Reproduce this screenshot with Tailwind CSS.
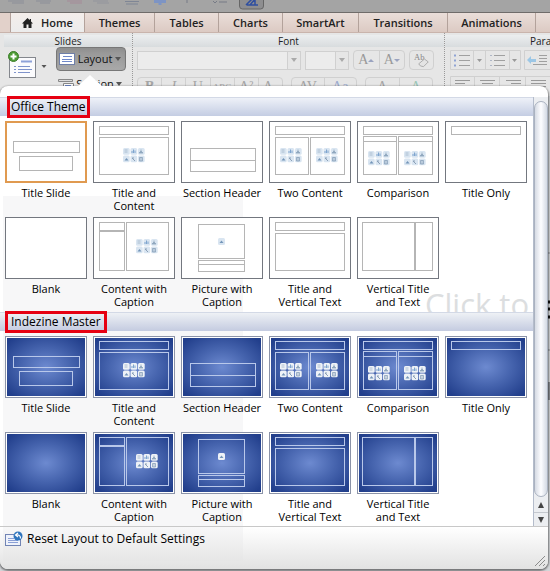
<!DOCTYPE html>
<html lang="en">

<head>
  <meta charset="UTF-8" />
  <meta name="viewport" content="width=device-width, initial-scale=1.0" />
  <title>Slide Layout Gallery</title>
  <script src="https://cdn.jsdelivr.net/npm/@tailwindcss/browser@4"></script>
</head>

<body class="relative min-h-screen overflow-hidden bg-[#d3d5d8] font-['Lucida_Grande','Open_Sans',sans-serif] text-black">

  <!-- Shared artwork -->
  <svg class="absolute size-0" aria-hidden="true">
    <defs>
      <radialGradient id="blue" cx="50%" cy="50%" r="65%">
        <stop offset="0" stop-color="#6d8ad0" />
        <stop offset="0.5" stop-color="#4664ae" />
        <stop offset="1" stop-color="#223f8c" />
      </radialGradient>
      <g id="glyphs">
        <path d="M1.5 2h3M1.5 4h3" stroke="#9fb4c9" stroke-width="0.8" />
        <path d="M9 5V3M10.5 5V1.5M12 5V2.5" stroke="#7fa5cf" stroke-width="1" />
        <path d="M18 1.5v2M16 5l2-2 2 2z" stroke="#8fa7be" stroke-width="0.8" fill="#8fa7be" />
        <path d="M1.5 12.5l2-2.500 2 2.500z" fill="#7395b8" />
        <path d="M9 10l3 3M9 10h2" stroke="#8ba0b7" stroke-width="1" />
        <path d="M16.5 9.500h3v3.500h-3zM18 9.500v3.500" stroke="#7f99b3" stroke-width="0.7" fill="none" />
      </g>
    </defs>
  </svg>

  <!-- Toolbar -->
  <header class="flex h-3 items-start justify-between overflow-hidden bg-[#a4a4a4]">
    <svg class="h-3 w-68 shrink-0" viewBox="0 0 272 12" fill="none">
      <path d="M8 1h16M12 3h12M36 1h15M40 3h10" stroke="#8b8e98" />
      <path d="M67 1h15M70 3h12" stroke="#a58a98" />
      <path d="M93 1h15M97 3h12" stroke="#92949c" />
      <path d="M125 1.500h14M126 4h12" stroke="#7f8695" />
      <path d="M154 1.500h12M160 0v5" stroke="#7d94c4" stroke-width="3" />
      <path d="M187 0v3M213 1l2 2 2-2M219 2h8" stroke="#777b86" />
      <path d="M239.500 -4v10q0 3 3 3h18q3 0 3-3v-10z" fill="#8e8e90" stroke="#666" />
      <path d="M246 5l7-7M250 5l5-6v6h3M247 5h10" stroke="#2f4fa0" stroke-width="1.500" />
    </svg>
  </header>

  <!-- Ribbon tabs -->
  <nav class="flex h-5 overflow-hidden border-t border-[#6f6c6a] bg-[#e2d1ca] text-[11px] leading-[19px] font-semibold text-[#222]">
    <span class="w-[11px] shrink-0 border-r border-[#b3a29b]"></span>
    <a href="#home" class="flex w-[73px] shrink-0 items-center justify-center gap-2 bg-linear-to-b from-[#f4eeeb] to-[#ececec]">
      <svg class="h-[10px] w-[11px]" viewBox="0 0 11 10" fill="#222"><path d="M5.500 0L0 5.500h1.500V10H4.500V6.500h2V10h3V5.500H11L9 3.500V1H7.800v1.300z" /></svg>
      Home</a>
    <a href="#themes" class="w-[71px] shrink-0 border-x border-[#b3a29b] bg-linear-to-b from-[#eaded9] to-[#dccac3] text-center">Themes</a>
    <a href="#tables" class="w-16 shrink-0 border-r border-[#b3a29b] bg-linear-to-b from-[#eaded9] to-[#dccac3] text-center">Tables</a>
    <a href="#charts" class="w-16 shrink-0 border-r border-[#b3a29b] bg-linear-to-b from-[#eaded9] to-[#dccac3] text-center">Charts</a>
    <a href="#smartart" class="w-[76px] shrink-0 border-r border-[#b3a29b] bg-linear-to-b from-[#eaded9] to-[#dccac3] text-center">SmartArt</a>
    <a href="#transitions" class="w-[89px] shrink-0 border-r border-[#b3a29b] bg-linear-to-b from-[#eaded9] to-[#dccac3] text-center">Transitions</a>
    <a href="#animations" class="w-[88px] shrink-0 border-r border-[#b3a29b] bg-linear-to-b from-[#eaded9] to-[#dccac3] text-center">Animations</a>
    <span class="flex-1 bg-linear-to-b from-[#eaded9] to-[#dccac3]"></span>
  </nav>

  <!-- Ribbon -->
  <section class="flex h-16 overflow-hidden border-t border-[#c9b4ac] bg-[#e6e6e6] pl-1 text-[10px] leading-[14px] text-[#222]">
    <div class="w-32 shrink-0">
      <h2 class="mt-0.5 h-3 bg-linear-to-b from-[#eceeef] to-[#d8dcde] text-center leading-3">Slides</h2>
      <div class="flex justify-between pr-1.5">
        <button class="flex items-start pt-px pl-1" aria-label="New Slide">
          <svg class="h-8 w-10" viewBox="0 0 40 32" fill="none">
            <rect x="1.500" y="9.500" width="26" height="20" fill="#fbfbfd" stroke="#84878d" />
            <path d="M13 13.500h11" stroke="#8fa2d8" stroke-width="2" />
            <path d="M6 18.500h2M6 21.500h2M6 24.500h2M10 18.500h12M10 21.500h14M10 24.500h12" stroke="#7f93cb" />
            <circle cx="5.500" cy="8.500" r="5" fill="#4d9b35" stroke="#3c7d2a" />
            <path d="M5.500 5.500v6M2.500 8.500h6" stroke="#fff" stroke-width="2" />
            <path d="M33.500 17h5L36 20z" fill="#555" />
          </svg>
        </button>
        <div class="w-[70px]">
          <button class="flex h-6 w-full items-center justify-between rounded border border-[#777] bg-linear-to-b from-[#949494] to-[#a9a9a9] pr-1 pl-0.5 text-[11px] text-[#111] shadow-inner">
            <svg class="h-3 w-4" viewBox="0 0 16 12" fill="none"><rect x="0.500" y="0.500" width="15" height="11" fill="#fff" stroke="#6f7fa8" /><path d="M4 3.500h9M3 6.500h10M3 8.500h10" stroke="#6f88ca" /></svg>
            Layout
            <svg class="h-1 w-1.5" viewBox="0 0 6 4"><path d="M0 0h6L3 4z" fill="#555" /></svg>
          </button>
          <button class="mt-1.5 flex w-full items-center justify-between pr-1 pl-0.5 text-[11px] text-[#111]">
            <svg class="h-3 w-4" viewBox="0 0 16 12" fill="none"><path d="M0.500 1.500h14v2h-14z" fill="#ddd" stroke="#888" /><path d="M5.500 5.500h10v6h-10z" fill="#fff" stroke="#888" /><path d="M7 7.500h6M7 9.500h6" stroke="#6f88ca" /></svg>
            Section
            <svg class="h-1 w-1.5" viewBox="0 0 6 4"><path d="M0 0h6L3 4z" fill="#555" /></svg>
          </button>
        </div>
      </div>
    </div>

    <div class="w-[312px] shrink-0 border-l border-dotted border-[#999]">
      <h2 class="mt-0.5 h-3 bg-linear-to-b from-[#eceeef] to-[#d8dcde] text-center leading-3">Font</h2>
      <div class="flex items-center gap-1 pt-[3px] pl-1 text-[#aaa]">
        <div class="flex h-[19px] w-[164px] items-center border border-[#d0d0d0]">
          <select aria-label="Font name" class="h-full flex-1 appearance-none border-r border-[#d0d0d0] bg-[#ececec]"></select>
          <svg class="mx-[3px] h-1 w-1.5" viewBox="0 0 6 4"><path d="M0 0h6L3 4z" fill="#aaa" /></svg>
        </div>
        <div class="flex h-[19px] w-11 items-center border border-[#d0d0d0]">
          <select aria-label="Font size" class="h-full flex-1 appearance-none border-r border-[#d0d0d0] bg-[#ececec]"></select>
          <svg class="mx-[3px] h-1 w-1.5" viewBox="0 0 6 4"><path d="M0 0h6L3 4z" fill="#aaa" /></svg>
        </div>
        <div class="flex h-5 w-[52px] rounded-sm border border-[#d0d0d0] font-['Liberation_Serif',serif] text-[14px] leading-[18px] text-[#999]">
          <button class="flex flex-1 items-center justify-center border-r border-[#d0d0d0]">A<svg class="h-[3px] w-1.5" viewBox="0 0 6 3"><path d="M0 3h6L3 0z" fill="#9aa3c0" /></svg></button>
          <button class="flex flex-1 items-center justify-center">A<svg class="h-[3px] w-1.5" viewBox="0 0 6 3"><path d="M0 0h6L3 3z" fill="#9aa3c0" /></svg></button>
        </div>
        <button class="flex h-5 w-[25px] items-center rounded-sm border border-[#d0d0d0] pl-1" aria-label="Clear Formatting">
          <svg class="h-4 w-5" viewBox="0 0 20 16"><text x="0" y="8" font-size="9" font-family="Liberation Serif" fill="#888">Ab</text><path d="M5 12l6-5 4 3-5 5q-4 0-5-3z" fill="#e4e4e4" stroke="#aaa" /></svg>
        </button>
      </div>
      <div class="flex gap-2 pt-[7px] pl-1 font-['Liberation_Serif',serif] text-[14px] text-[#a5a5a5]">
        <div class="flex h-5 w-[146px] rounded-sm border border-[#d0d0d0]">
          <button class="flex-1 border-r border-[#d0d0d0] font-bold">B</button>
          <button class="flex-1 border-r border-[#d0d0d0] italic">I</button>
          <button class="flex-1 border-r border-[#d0d0d0] underline">U</button>
          <button class="flex-1 border-r border-[#d0d0d0] text-[9px] line-through">ABC</button>
          <button class="flex-1 border-r border-[#d0d0d0]">A²</button>
          <button class="flex-1">A₂</button>
        </div>
        <div class="flex h-5 w-[66px] rounded-sm border border-[#d0d0d0]">
          <button class="flex-1 border-r border-[#d0d0d0]">AV</button>
          <button class="flex-1 text-[#9daccf]">Aa</button>
        </div>
        <div class="flex h-5 w-[68px] rounded-sm border border-[#d0d0d0]">
          <button class="flex-1 border-r border-[#d0d0d0]">A</button>
          <button class="flex-1 text-[#9cc7b8]">A</button>
        </div>
      </div>
    </div>

    <div class="flex-1 border-l border-dotted border-[#999]">
      <h2 class="mt-0.5 h-3 overflow-hidden bg-linear-to-b from-[#eceeef] to-[#d8dcde] pl-[85px] leading-3">Parag</h2>
      <svg class="mt-px h-12 w-[106px]" viewBox="0 0 106 48" fill="none">
        <path d="M5.500 2.500h70v19h-70zM40.500 2.500v19M28.500 2.500v19M64.500 2.500v19M79.500 2.500h30v19h-30z" stroke="#d0d0d0" />
        <path d="M9 7.500h2M9 12.500h2M9 17.500h2" stroke="#8fa3d4" stroke-width="2" />
        <path d="M14 7.500h11M14 12.500h11M14 17.500h11M49 7.500h11M49 12.500h11M49 17.500h11M94 7.500h8M94 10.500h8M94 13.500h8M88 16.500h14" stroke="#a0a0a0" />
        <path d="M45 7.500h2M45 12.500h2M45 17.500h2" stroke="#aeb6c6" />
        <path d="M32 11h5l-2.500 3zM67 11h5l-2.500 3z" fill="#999" />
        <path d="M82 12l4-4v3h5v3h-5v2z" fill="#9cc7e6" />
        <path d="M5.500 28.500h101M5.500 28.500v20M29.500 28.500v20M54.500 28.500v20M80.500 28.500v20" stroke="#d0d0d0" />
        <path d="M10 32.500h15M10 35.500h10M10 38.500h15M35 32.500h15M37 35.500h11M35 38.500h15M61 32.500h15M66 35.500h10M61 38.500h15M86 32.500h15M86 35.500h15M86 38.500h15" stroke="#999" />
      </svg>
    </div>
  </section>

  <!-- Edge of the slide window behind the menu -->
  <div class="flex justify-end">
    <svg class="h-[380px] w-1" viewBox="0 0 4 380"><path d="M0 157h4M0 254h4" stroke="#8a8d92" /><path d="M1 206h3M1 213h3M1 221h3" stroke="#111" stroke-width="3" /><path d="M2 286h2v18H2z" fill="#8a8d92" /></svg>
  </div>

  <!-- Layout menu -->
  <main class="absolute top-[86px] right-0.5 left-0 rounded-lg bg-white shadow-[0_1px_2px_1px_rgba(0,0,0,0.45)]">
    <svg class="absolute -top-3 left-[78px] h-3 w-6" viewBox="0 0 24 12"><path d="M0 12L12 1l12 11z" fill="#fff" /></svg>
    <div class="absolute top-[110px] bottom-2 left-[3px] w-60 bg-[#f7f7f8]"></div>

    <div class="relative flex pt-[11px]">
      <div class="min-w-0 flex-1">
        <h3 class="flex h-[19px] items-center border-t border-[#d3d9e6] bg-linear-to-b from-[#eef1f8] to-[#c4cde3] pl-[7px] text-[12px] leading-4">
          <span class="-my-1 border-3 border-[#e60012] px-px">Office Theme</span>
        </h3>
        <div class="relative">
          <p class="absolute right-0 bottom-0 h-7 w-[108px] overflow-hidden text-[31px] leading-10 whitespace-nowrap text-[#dcdee0]" aria-hidden="true">Click to</p>
          <div id="office" class="relative grid grid-cols-6 gap-x-1.5 gap-y-1 pt-[5px] pr-1.5 pb-[3px] pl-[5px]"></div>
        </div>
        <h3 class="flex h-[19px] items-center border-t border-[#d3d9e6] bg-linear-to-b from-[#eef1f5] to-[#c4cbe0] pl-[5px] text-[12px] leading-4">
          <span class="-my-1 border-3 border-[#e60012] px-[3px]">Indezine Master</span>
        </h3>
        <div id="indezine" class="grid grid-cols-6 gap-x-1.5 gap-y-1 pt-[5px] pr-1.5 pb-0.5 pl-[5px]"></div>
      </div>

      <!-- Scrollbar -->
      <div class="flex w-[15px] flex-col border-l border-[#b4bccb] bg-[#eceef1]">
        <div class="mt-1 flex-1 rounded-full border border-[#aab2c0] bg-linear-to-r from-[#d6dbe4] via-[#fdfdff] to-[#d3d9e3]"></div>
        <button class="flex h-[15px] items-center justify-center" aria-label="Scroll up"><svg class="h-1.5 w-1.5" viewBox="0 0 6 6"><path d="M3 0l3 6H0z" fill="#444" /></svg></button>
        <button class="flex h-[14px] items-center justify-center border-t border-[#c4c8ce]" aria-label="Scroll down"><svg class="h-1.5 w-1.5" viewBox="0 0 6 6"><path d="M0 0h6L3 6z" fill="#444" /></svg></button>
      </div>
    </div>

    <footer class="relative flex h-[43px] items-start justify-between rounded-b-lg border-t border-[#c8c8c8] bg-linear-to-b from-white/0 to-[#e2e2e2]">
      <button class="flex items-center gap-1 pt-1 pl-[5px] text-[12px] leading-4">
        <svg class="h-4 w-[18px]" viewBox="0 0 18 16" fill="none">
          <rect x="0.500" y="3.500" width="15" height="11" fill="#eef2fb" stroke="#7184b4" />
          <path d="M3 7.500h6M3 9.500h10M3 11.500h10" stroke="#8ba0d6" />
          <circle cx="13" cy="5" r="4.500" fill="#2e74bd" />
          <path d="M15.500 7.500q0-4-4-3.500M13 2l-2.500 2L13 6" stroke="#fff" stroke-width="1.200" />
        </svg>
        Reset Layout to Default Settings
      </button>
      <svg class="mr-0.5 mb-0.5 h-3 w-3 self-end" viewBox="0 0 12 12"><path d="M1 11L11 1M5 11l6-6M9 11l2-2" stroke="#8b8b8b" /></svg>
    </footer>
  </main>

  <script>
    // boxes: [x, y, width, height], icons: [x, y] of each content cluster
    const title = [6, 5, 69, 8];
    const layouts = [
      { name: "Title Slide", boxes: [[8, 20, 66, 11], [14, 35, 53, 14]] },
      { name: "Title and<br>Content", boxes: [title, [6, 16, 69, 37]], icons: [[30, 27]] },
      { name: "Section Header", boxes: [[9, 27, 65, 12], [9, 39, 65, 11]] },
      { name: "Two Content", boxes: [title, [6, 16, 33, 37], [41, 16, 34, 37]], icons: [[11, 27], [47, 27]] },
      { name: "Comparison", boxes: [title, [6, 15, 33, 5], [41, 15, 34, 5], [6, 20, 33, 33], [41, 20, 34, 33]], icons: [[11, 30], [47, 30]] },
      { name: "Title Only", boxes: [title] },
      { name: "Blank", boxes: [] },
      { name: "Content with<br>Caption", boxes: [[6, 5, 25, 8], [6, 14, 25, 39], [33, 5, 42, 48]], icons: [[43, 22]] },
      { name: "Picture with<br>Caption", boxes: [[17, 7, 46, 34], [17, 43, 46, 4], [17, 47, 46, 7]], picture: [37, 21] },
      { name: "Title and<br>Vertical Text", boxes: [title, [6, 16, 69, 37]] },
      { name: "Vertical Title<br>and Text", boxes: [[5, 5, 52, 48], [58, 5, 17, 48]] }
    ];

    function drawTiles(x, y, dark) {
      const fill = dark ? "#eef2f7" : "#d9e5f1";
      let tiles = "";
      for (let row = 0; row < 2; row++) {
        for (let col = 0; col < 3; col++) {
          tiles += `<rect x="${col * 7.5}" y="${row * 7.5}" width="6.700" height="6.700" rx="1.500" fill="${fill}"/>`;
        }
      }
      return `<g transform="translate(${x} ${y})">${tiles}<use href="#glyphs"/></g>`;
    }

    function renderLayouts(id, dark) {
      let content = "";
      layouts.forEach((layout, i) => {
        const selected = !dark && i === 0;
        const line = dark ? "#b9c8ea" : "#b5b5b5";
        const border = selected ? "#e09a50" : dark ? "#8b93a8" : "#73777f";
        let art = `<rect x="0.500" y="0.500" width="81" height="61" fill="#fff" stroke="${border}"/>`;
        if (selected) art += `<rect x="1" y="1" width="80" height="60" fill="none" stroke="${border}" stroke-width="2"/>`;
        if (dark) art += `<rect x="2" y="2" width="78" height="58" fill="url(#blue)"/>`;
        for (const [x, y, w, h] of layout.boxes) {
          art += `<rect x="${x + 0.5}" y="${y + 0.5}" width="${w}" height="${h}" fill="none" stroke="${line}"/>`;
        }
        for (const [x, y] of layout.icons || []) art += drawTiles(x, y, dark);
        if (layout.picture) {
          const [x, y] = layout.picture;
          art += `<g transform="translate(${x} ${y})"><rect width="7" height="7" rx="1.500" fill="${dark ? "#eef2f7" : "#d9e5f1"}"/><path d="M1.500 5l2-2.500 2 2.500z" fill="#7395b8"/></g>`;
        }
        content += `
<button class="flex h-[92px] flex-col items-center text-[11px] leading-[13px] whitespace-nowrap">
  <svg class="mb-[3px] w-full" viewBox="0 0 82 62">${art}</svg>
  <span>${layout.name}</span>
</button>`;
      });
      document.getElementById(id).innerHTML = content;
    }

    renderLayouts("office", false);
    renderLayouts("indezine", true);
  </script>
</body>

</html>
